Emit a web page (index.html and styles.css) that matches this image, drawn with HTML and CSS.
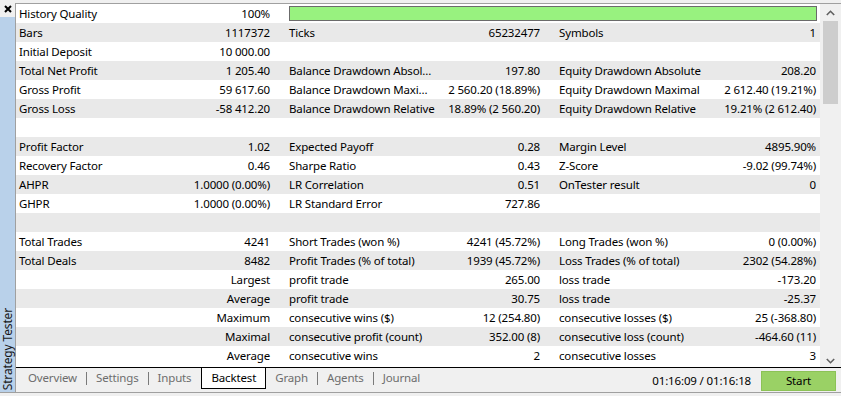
FILE: index.html
```html
<html>
<head>
    <title>Strategy Tester</title>
    <meta charset="UTF-8">
<link rel="stylesheet" href="styles.css">
</head>
<body>
    <div id="window">
        <div id="side">
            <div id="closeBox">
                <svg width="8" height="8" viewBox="0 0 8 8"><path d="M1 1 L7 7 M7 1 L1 7" stroke="#000" stroke-width="2"/></svg>
            </div>
            <div id="sideStrip"><span class="sideTitle">Strategy Tester</span></div>
        </div>
        <div id="main">
            <div id="content">
                <div id="report">
                    <div class="row"><div class="lbl">History Quality</div><div class="val">100%</div><div class="barCell"><div class="qualityBar"></div></div></div>
                    <div class="row"><div class="lbl">Bars</div><div class="val">1117372</div><div class="lbl">Ticks</div><div class="val">65232477</div><div class="lbl">Symbols</div><div class="val last">1</div></div>
                    <div class="row"><div class="lbl">Initial Deposit</div><div class="val">10 000.00</div><div class="lbl"></div><div class="val"></div><div class="lbl"></div><div class="val last"></div></div>
                    <div class="row"><div class="lbl">Total Net Profit</div><div class="val">1 205.40</div><div class="lbl">Balance Drawdown Absol...</div><div class="val">197.80</div><div class="lbl">Equity Drawdown Absolute</div><div class="val last">208.20</div></div>
                    <div class="row"><div class="lbl">Gross Profit</div><div class="val">59 617.60</div><div class="lbl">Balance Drawdown Maxi...</div><div class="val">2 560.20 (18.89%)</div><div class="lbl">Equity Drawdown Maximal</div><div class="val last">2 612.40 (19.21%)</div></div>
                    <div class="row"><div class="lbl">Gross Loss</div><div class="val">-58 412.20</div><div class="lbl">Balance Drawdown Relative</div><div class="val">18.89% (2 560.20)</div><div class="lbl">Equity Drawdown Relative</div><div class="val last">19.21% (2 612.40)</div></div>
                    <div class="row"></div>
                    <div class="row"><div class="lbl">Profit Factor</div><div class="val">1.02</div><div class="lbl">Expected Payoff</div><div class="val">0.28</div><div class="lbl">Margin Level</div><div class="val last">4895.90%</div></div>
                    <div class="row"><div class="lbl">Recovery Factor</div><div class="val">0.46</div><div class="lbl">Sharpe Ratio</div><div class="val">0.43</div><div class="lbl">Z-Score</div><div class="val last">-9.02 (99.74%)</div></div>
                    <div class="row"><div class="lbl">AHPR</div><div class="val">1.0000 (0.00%)</div><div class="lbl">LR Correlation</div><div class="val">0.51</div><div class="lbl">OnTester result</div><div class="val last">0</div></div>
                    <div class="row"><div class="lbl">GHPR</div><div class="val">1.0000 (0.00%)</div><div class="lbl">LR Standard Error</div><div class="val">727.86</div><div class="lbl"></div><div class="val last"></div></div>
                    <div class="row"></div>
                    <div class="row"><div class="lbl">Total Trades</div><div class="val">4241</div><div class="lbl">Short Trades (won %)</div><div class="val">4241 (45.72%)</div><div class="lbl">Long Trades (won %)</div><div class="val last">0 (0.00%)</div></div>
                    <div class="row"><div class="lbl">Total Deals</div><div class="val">8482</div><div class="lbl">Profit Trades (% of total)</div><div class="val">1939 (45.72%)</div><div class="lbl">Loss Trades (% of total)</div><div class="val last">2302 (54.28%)</div></div>
                    <div class="row"><div class="lbl"></div><div class="val">Largest</div><div class="lbl">profit trade</div><div class="val">265.00</div><div class="lbl">loss trade</div><div class="val last">-173.20</div></div>
                    <div class="row"><div class="lbl"></div><div class="val">Average</div><div class="lbl">profit trade</div><div class="val">30.75</div><div class="lbl">loss trade</div><div class="val last">-25.37</div></div>
                    <div class="row"><div class="lbl"></div><div class="val">Maximum</div><div class="lbl">consecutive wins ($)</div><div class="val">12 (254.80)</div><div class="lbl">consecutive losses ($)</div><div class="val last">25 (-368.80)</div></div>
                    <div class="row"><div class="lbl"></div><div class="val">Maximal</div><div class="lbl">consecutive profit (count)</div><div class="val">352.00 (8)</div><div class="lbl">consecutive loss (count)</div><div class="val last">-464.60 (11)</div></div>
                    <div class="row"><div class="lbl"></div><div class="val">Average</div><div class="lbl">consecutive wins</div><div class="val">2</div><div class="lbl">consecutive losses</div><div class="val last">3</div></div>
                </div>
                <div id="scrollBar">
                    <div class="scrollArrow">
                        <svg width="9" height="6" viewBox="0 0 9 6"><path d="M0.8 5 L4.5 1.3 L8.2 5" fill="none" stroke="#606060" stroke-width="1.6"/></svg>
                    </div>
                    <div class="scrollTrack"><div class="scrollThumb"></div></div>
                    <div class="scrollArrow downArrow">
                        <svg width="9" height="6" viewBox="0 0 9 6"><path d="M0.8 1 L4.5 4.7 L8.2 1" fill="none" stroke="#606060" stroke-width="1.6"/></svg>
                    </div>
                </div>
            </div>
            <div id="tabBar">
                <div class="tab">Overview</div>
                <div class="tabSep"></div>
                <div class="tab">Settings</div>
                <div class="tabSep"></div>
                <div class="tab">Inputs</div>
                <div class="tab activeTab">Backtest</div>
                <div class="tab">Graph</div>
                <div class="tabSep"></div>
                <div class="tab">Agents</div>
                <div class="tabSep"></div>
                <div class="tab">Journal</div>
                <div class="tabSpacer"></div>
                <div class="timer">01:16:09 / 01:16:18</div>
                <div class="startButton">Start</div>
            </div>
        </div>
    </div>
</body>
</html>
```
FILE: styles.css
```css
body {
    margin: 0;
    padding: 0;
    background-color: #f0f0f0;
    font-family: "Segoe UI", "Noto Sans", sans-serif;
    font-size: 11.5px;
    letter-spacing: -0.15px;
    color: #000;
    overflow: hidden;
}

#window {
    display: flex;
    width: 841px;
    height: 392px;
    border-bottom: 1px solid #a0a0a0;
}

#side {
    width: 15px;
    display: flex;
    flex-direction: column;
}

#closeBox {
    height: 17px;
    padding: 5px 0 0 4px;
    box-sizing: border-box;
}

#closeBox svg {
    display: block;
}

#sideStrip {
    flex: 1;
    background-color: #b9d1ea;
    display: flex;
    flex-direction: column;
    justify-content: flex-end;
    align-items: center;
    padding-bottom: 2px;
}

.sideTitle {
    writing-mode: vertical-rl;
    transform: rotate(180deg);
    color: #1a1a1a;
    line-height: 14px;
    font-size: 12px;
}

#main {
    flex: 1;
    margin-top: 3px;
    border-top: 1px solid #a0a0a0;
    border-left: 1px solid #a0a0a0;
    display: flex;
    flex-direction: column;
}

#content {
    display: flex;
    height: 363px;
}

#report {
    width: 804px;
    background-color: #fff;
}

.row {
    display: grid;
    grid-template-columns: 160px 110px 160px 110px 160px 104px;
    height: 19px;
    line-height: 19px;
}

.row:nth-child(even) {
    background-color: #e9e9e9;
}

.lbl {
    padding-left: 3px;
    white-space: nowrap;
}

.val {
    padding-right: 16px;
    text-align: right;
    white-space: nowrap;
}

.val.last {
    padding-right: 4px;
}

.barCell {
    grid-column: 3 / 7;
    padding: 2px 3px 0 3px;
}

.qualityBar {
    height: 13px;
    background-color: #98f27f;
    border: 1px solid #6b6b6b;
}

#scrollBar {
    width: 21px;
    display: flex;
    flex-direction: column;
    align-items: center;
}

.scrollArrow {
    height: 17px;
    display: flex;
    align-items: center;
    justify-content: center;
    width: 17px;
}

.downArrow {
    height: 14px;
    margin-bottom: 3px;
    align-items: flex-end;
}

.scrollTrack {
    flex: 1;
    width: 17px;
    padding-left: 2px;
}

.scrollThumb {
    width: 15px;
    height: 83px;
    background-color: #cdcdcd;
}

#tabBar {
    flex: 1;
    display: flex;
    align-items: flex-start;
    border-top: 1px solid #000;
    padding-left: 3px;
}

.tab {
    color: #6d6d6d;
    padding: 0 9px;
    height: 20px;
    line-height: 20px;
}

.activeTab {
    color: #000;
    background-color: #fff;
    border: 1px solid #000;
    border-top: none;
    margin: 0 0 0 1px;
}

.tabSep {
    width: 1px;
    height: 13px;
    margin-top: 4px;
    background-color: #7a7a7a;
}

.tabSpacer {
    flex: 1;
}

.timer {
    margin-top: 3px;
    line-height: 20px;
    margin-right: 10px;
}

.startButton {
    margin-top: 3px;
    width: 73px;
    height: 18px;
    line-height: 18px;
    text-align: center;
    background-color: #9ad165;
    border: 1px solid #8cc256;
    margin-right: 5px;
}
```
